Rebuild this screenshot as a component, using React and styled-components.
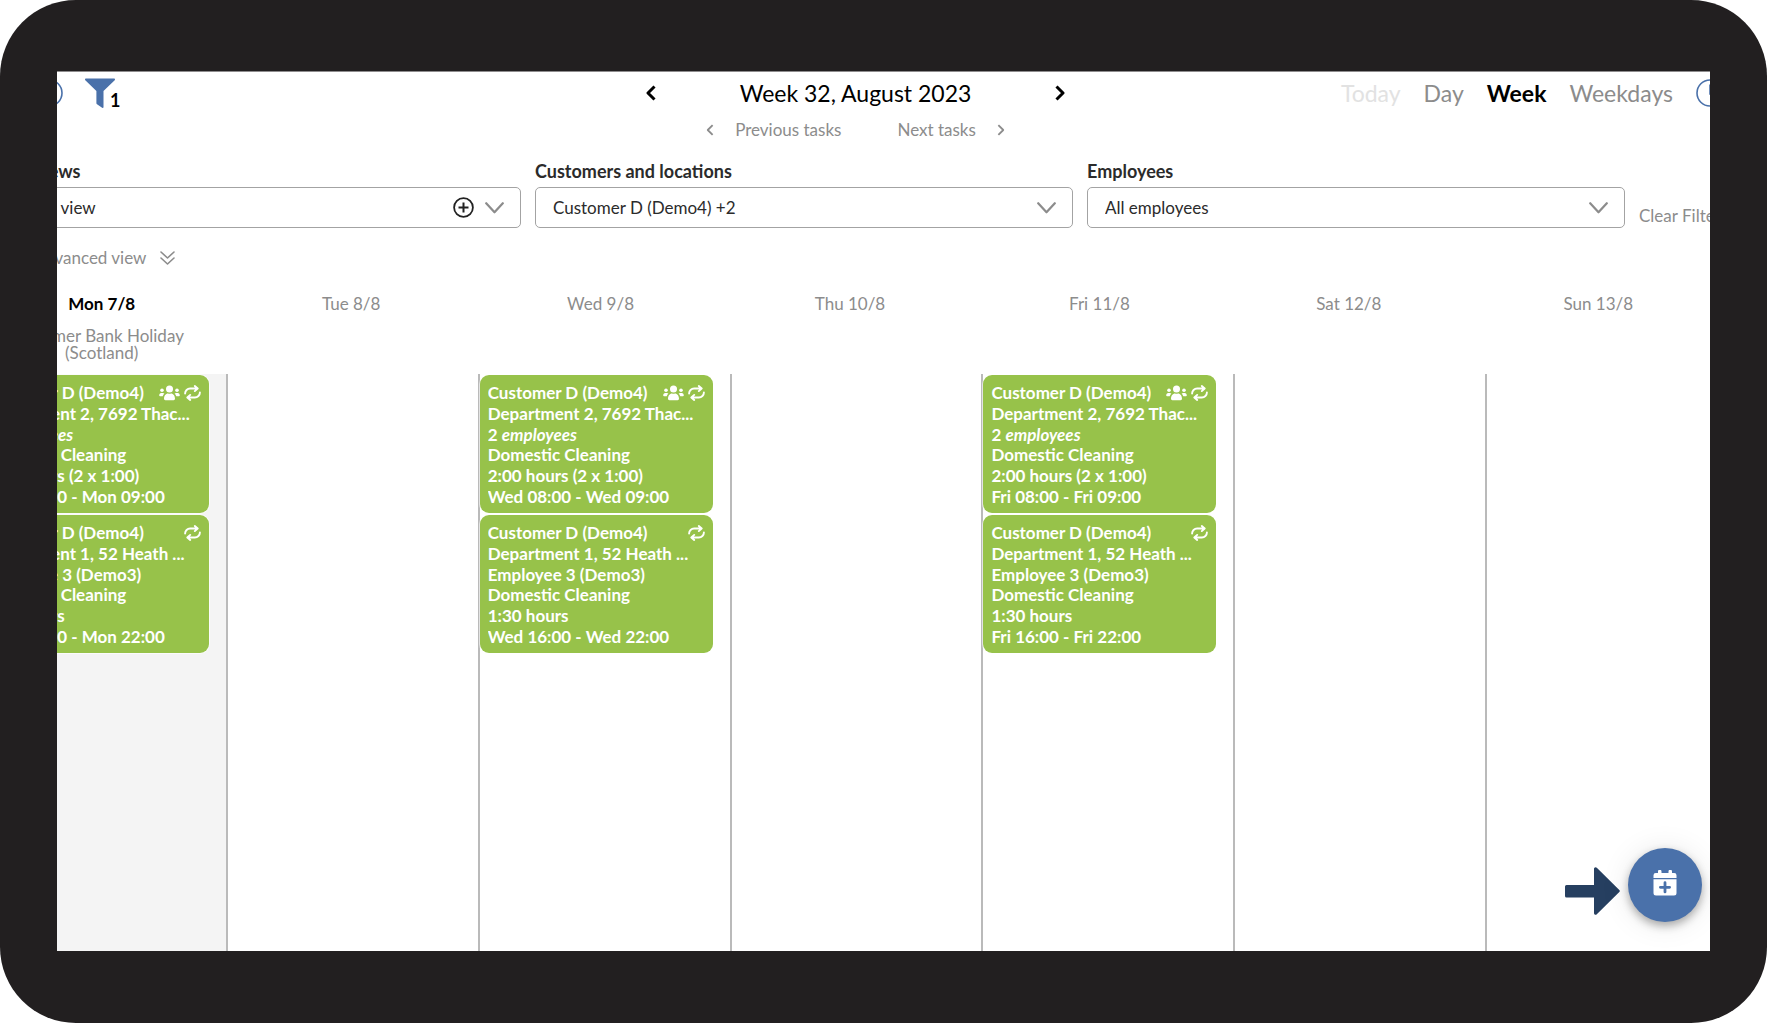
import React from 'react';
import styled, { createGlobalStyle, css } from 'styled-components';

const GlobalStyle = createGlobalStyle`
  *, *::before, *::after { box-sizing: border-box; }
  body {
    margin: 0;
    background: #fff;
    color: #000;
    font: 17px/20px Lato, "Liberation Sans", sans-serif;
  }
  button, select { font: inherit; color: inherit; }
  svg { display: block; flex: none; }
`;

const Device = styled.div`
  display: flex;
  min-height: 100vh;
  padding: 71px 57px 72px;
  border-radius: 76px;
  background: #221f20;
`;

const Screen = styled.main`
  position: relative;
  display: flex;
  flex: 1;
  min-width: 0;
  overflow: hidden;
  border-top: 1px solid #8f8d8e;
  background: #fff;
`;

/* The planner is wider than the screen and runs off both of its sides. */
const Planner = styled.div`
  display: flex;
  flex: 1;
  flex-direction: column;
  min-width: 0;
  margin: 0 -27px 0 -83px;
  padding-top: 7px;
`;

const Header = styled.header`
  display: grid;
  grid-template-columns: 1fr 420px 1fr;
  align-items: start;
`;

const PlainButton = styled.button`
  display: flex;
  align-items: center;
  padding: 0;
  border: 0;
  background: none;
  white-space: nowrap;
  cursor: pointer;
`;

const Tools = styled.div`
  display: flex;
  align-items: center;
  gap: 22px;
  height: 28px;
  padding-left: 61px;
  color: #4a71aa;
`;

const FilterButton = styled(PlainButton)`
  align-items: flex-end;
`;

const FilterCount = styled.span`
  margin-left: -5px;
  color: #000;
  font-size: 18px;
  font-weight: 700;
  line-height: 16px;
`;

const Period = styled.nav`
  display: flex;
  flex-direction: column;
  gap: 13px;
`;

const WeekSwitch = styled.div`
  display: flex;
  align-items: center;
  justify-content: space-between;
  height: 28px;
`;

const Title = styled.h1`
  margin: 0;
  font-size: 23px;
  font-weight: 400;
  line-height: 28px;
`;

const TaskSwitch = styled.div`
  display: flex;
  justify-content: center;
  gap: 56px;
  color: #8c8c8c;
`;

const TaskButton = styled(PlainButton)`
  gap: 21px;
`;

const Modes = styled.div`
  display: flex;
  align-items: center;
  justify-content: flex-end;
  gap: 23px;
  height: 28px;
  padding-right: 13px;
  color: #4a71aa;
`;

const Mode = styled(PlainButton)`
  color: #8c8c8c;
  font-size: 23px;
  line-height: 28px;
  &:disabled { color: #e2e2e2; }
  ${({ $active }) => $active && css`
    color: #000;
    font-weight: 700;
  `}
`;

const Filters = styled.section`
  display: grid;
  grid-template-columns: 1fr 1fr 1fr 98px;
  gap: 14px;
  align-items: end;
  margin-top: 21px;
  padding-left: 9px;
`;

const Field = styled.div`
  display: flex;
  flex-direction: column;
  gap: 6px;
  min-width: 0;
  color: #2b2b2b;
`;

const Label = styled.label`
  font-size: 18px;
  font-weight: 700;
`;

const SelectBox = styled.div`
  position: relative;
  display: flex;
`;

const Select = styled.select`
  flex: 1;
  min-width: 0;
  height: 41px;
  padding: 0 17px;
  border: 1px solid #a3a3a3;
  border-radius: 5px;
  background: #fff;
  appearance: none;
`;

const SelectIcons = styled.div`
  position: absolute;
  inset: 0 17px 0 auto;
  display: flex;
  align-items: center;
  gap: 11px;
  color: #8c8c8c;
  pointer-events: none;
`;

const AddButton = styled(PlainButton)`
  color: #222;
  pointer-events: auto;
`;

const ClearButton = styled(PlainButton)`
  padding-bottom: 2px;
  color: #8c8c8c;
`;

const AdvancedButton = styled(PlainButton)`
  gap: 14px;
  align-self: flex-start;
  margin-top: 20px;
  padding-left: 17px;
  color: #8c8c8c;
`;

const DayHeads = styled.div`
  display: grid;
  grid-template-columns: repeat(7, 1fr);
  min-height: 80px;
  margin: 26px 14px 0 3px;
`;

const DayHead = styled.div`
  display: flex;
  flex-direction: column;
  align-items: center;
  gap: 13px;
  color: #8c8c8c;
  text-align: center;
`;

const DayName = styled.h2`
  margin: 0;
  font-size: 17px;
  font-weight: ${({ $today }) => ($today ? 700 : 400)};
  color: ${({ $today }) => ($today ? '#000' : 'inherit')};
`;

const Holiday = styled.p`
  max-width: 180px;
  margin: 0;
  line-height: 17px;
`;

const Days = styled.div`
  display: grid;
  flex: 1;
  grid-template-columns: repeat(7, 1fr);
`;

const Day = styled.section`
  display: flex;
  flex-direction: column;
  gap: 2px;
  min-width: 0;
  padding: 1px 17px 0 0;
  border-left: 2px solid #bababa;
  background: ${({ $today }) => ($today ? '#f4f4f4' : '#fff')};
`;

const Card = styled.article`
  display: grid;
  grid-template-rows: repeat(6, 1fr);
  align-items: center;
  min-height: 138px;
  padding: 8px 8px 6px;
  border-radius: 9px;
  background: #97c24a;
  box-shadow: 0 0 0 1px rgba(255, 255, 255, 0.6);
  color: #fff;
  font-weight: 700;
`;

const CardTop = styled.div`
  display: flex;
  justify-content: space-between;
  align-items: center;
`;

const CardLine = styled.div`
  overflow: hidden;
  text-overflow: ellipsis;
  white-space: nowrap;
`;

const CardIcons = styled.div`
  display: flex;
  align-items: center;
  gap: 4px;
`;

const AddTask = styled.div`
  position: absolute;
  right: 8px;
  bottom: 29px;
  display: flex;
  align-items: center;
  gap: 8px;
`;

const Arrow = styled.svg`
  margin-top: 11px;
  fill: #263f60;
`;

const RoundButton = styled.button`
  display: grid;
  place-items: center;
  width: 74px;
  height: 74px;
  padding: 0 0 4px;
  border: 0;
  border-radius: 50%;
  background: #4a71aa;
  box-shadow: 0 4px 8px rgba(0, 0, 0, 0.3), 0 2px 30px rgba(0, 0, 0, 0.1);
  cursor: pointer;
`;

const Chevron = ({ dir, big }) => (
  <svg width={big ? 10 : 8} height={big ? 16 : 12} viewBox="0 0 10 16" fill="none"
    stroke="currentColor" strokeWidth={big ? 3 : 2.4} strokeLinejoin="round">
    <path d={dir === 'left' ? 'M8.5 1.5 2 8l6.5 6.5' : 'M1.5 1.5 8 8l-6.5 6.5'} />
  </svg>
);

const ChevronDown = () => (
  <svg width="19" height="12" viewBox="0 0 19 12" fill="none" stroke="currentColor"
    strokeWidth="2.2" strokeLinecap="round" strokeLinejoin="round">
    <path d="M1.2 1.2 9.5 10.3l8.3-9.1" />
  </svg>
);

const DoubleDown = () => (
  <svg width="15" height="14" viewBox="0 0 15 14" fill="none" stroke="currentColor"
    strokeWidth="1.6" strokeLinecap="round" strokeLinejoin="round">
    <path d="M1 1l6.5 6L14 1M1 7l6.5 6L14 7" />
  </svg>
);

const PlusCircle = () => (
  <svg width="21" height="21" viewBox="0 0 21 21" fill="none" stroke="currentColor" strokeWidth="1.8">
    <circle cx="10.5" cy="10.5" r="9.4" />
    <path d="M10.5 5.5v10M5.5 10.5h10" strokeWidth="2" />
  </svg>
);

const Ring = ({ children }) => (
  <svg width="28" height="28" viewBox="0 0 28 28" fill="none" stroke="currentColor" strokeWidth="1.6">
    <circle cx="14" cy="14" r="13" />
    {children}
  </svg>
);

const Funnel = () => (
  <svg width="30" height="30" viewBox="0 0 30 30" fill="currentColor">
    <path d="M1 .5h28c.9 0 1.3 1 .7 1.7L18.5 13v16c0 .8-.8 1.2-1.4.8L12 26.2c-.4-.3-.6-.6-.6-1V13L.3 2.2C-.3 1.5.1.5 1 .5z" />
  </svg>
);

const People = () => (
  <svg width="21" height="16" viewBox="0 0 21 16" fill="currentColor">
    <circle cx="10.5" cy="4" r="3.5" />
    <circle cx="3" cy="5.2" r="1.8" />
    <circle cx="18" cy="5.2" r="1.8" />
    <path d="M5 13.8c0-3 1.7-5.4 4-5.4.5.3 1 .4 1.500.4s1-.1 1.500-.4c2.300 0 4 2.400 4 5.400 0 .9-.6 1.400-1.400 1.400H6.400C5.600 15.200 5 14.700 5 13.800z" />
    <path d="M2.200 8h1.700c.6 0 1.100.2 1.500.6A6.500 6.500 0 0 0 3.700 11.200H1.100C.6 11.200.2 10.900.2 10.400.2 9 1 8 2.200 8zM18.800 8h-1.700c-.6 0-1.100.2-1.500.6a6.500 6.500 0 0 1 1.700 2.600h2.600c.5 0 .9-.3.9-.8C20.800 9 20 8 18.800 8z" />
  </svg>
);

const Repeat = () => (
  <svg width="17" height="16" viewBox="0 0 17 16" fill="none" stroke="currentColor"
    strokeWidth="1.9" strokeLinecap="round" strokeLinejoin="round">
    <path d="M1.100 8.500a5 5 0 0 1 5-5H13.500M10.800 1l2.900 2.500-2.900 2.600" />
    <path d="M15.900 7.500a5 5 0 0 1-5 5H3.500M6.200 15l-2.900-2.500 2.900-2.600" />
  </svg>
);

const CalendarPlus = () => (
  <svg width="24" height="26" viewBox="0 0 24 26" fill="#fff">
    <path d="M5 1.5a1.5 1.5 0 0 1 3.5 0V3h7V1.5a1.5 1.5 0 0 1 3.5 0V3h2.2A2.3 2.3 0 0 1 23.5 5.3V8H.5V5.3A2.3 2.3 0 0 1 2.8 3H5z" />
    <path fillRule="evenodd" d="M.5 9.300h23V23a2.500 2.500 0 0 1-2.500 2.500H3A2.500 2.500 0 0 1 .5 23zM10.600 12.700v3.200H7.400a1.400 1.400 0 0 0 0 2.800h3.200v3.200a1.400 1.400 0 0 0 2.800 0v-3.200h3.200a1.400 1.400 0 0 0 0-2.800h-3.200v-3.200a1.400 1.400 0 0 0-2.800 0z" />
  </svg>
);

const DAYS = ['Mon 7/8', 'Tue 8/8', 'Wed 9/8', 'Thu 10/8', 'Fri 11/8', 'Sat 12/8', 'Sun 13/8'];
const WORKDAYS = ['Mon', 'Wed', 'Fri'];

const tasksFor = (day) => (WORKDAYS.includes(day) ? [
  {
    id: 'morning',
    shared: true,
    place: 'Department 2, 7692 Thac...',
    staff: <>2 <em>employees</em></>,
    length: '2:00 hours (2 x 1:00)',
    time: `${day} 08:00 - ${day} 09:00`,
  },
  {
    id: 'evening',
    shared: false,
    place: 'Department 1, 52 Heath ...',
    staff: 'Employee 3 (Demo3)',
    length: '1:30 hours',
    time: `${day} 16:00 - ${day} 22:00`,
  },
] : []);

function TaskCard({ task }) {
  return (
    <Card>
      <CardTop>
        <CardLine>Customer D (Demo4)</CardLine>
        <CardIcons>
          {task.shared && <People />}
          <Repeat />
        </CardIcons>
      </CardTop>
      <CardLine>{task.place}</CardLine>
      <CardLine>{task.staff}</CardLine>
      <CardLine>Domestic Cleaning</CardLine>
      <CardLine>{task.length}</CardLine>
      <CardLine>{task.time}</CardLine>
    </Card>
  );
}

function FilterField({ id, label, value, onAdd }) {
  return (
    <Field>
      <Label htmlFor={id}>{label}</Label>
      <SelectBox>
        <Select id={id} defaultValue={value}>
          <option>{value}</option>
        </Select>
        <SelectIcons>
          {onAdd && <AddButton type="button" aria-label="Add view"><PlusCircle /></AddButton>}
          <ChevronDown />
        </SelectIcons>
      </SelectBox>
    </Field>
  );
}

export default function App() {
  return (
    <Device>
      <GlobalStyle />
      <Screen>
        <Planner>
          <Header>
            <Tools>
              <PlainButton type="button" aria-label="Help"><Ring /></PlainButton>
              <FilterButton type="button" aria-label="Filters">
                <Funnel />
                <FilterCount>1</FilterCount>
              </FilterButton>
            </Tools>
            <Period>
              <WeekSwitch>
                <PlainButton type="button" aria-label="Previous week"><Chevron dir="left" big /></PlainButton>
                <Title>Week 32, August 2023</Title>
                <PlainButton type="button" aria-label="Next week"><Chevron dir="right" big /></PlainButton>
              </WeekSwitch>
              <TaskSwitch>
                <TaskButton type="button"><Chevron dir="left" />Previous tasks</TaskButton>
                <TaskButton type="button">Next tasks<Chevron dir="right" /></TaskButton>
              </TaskSwitch>
            </Period>
            <Modes>
              <Mode type="button" disabled>Today</Mode>
              <Mode type="button">Day</Mode>
              <Mode type="button" $active>Week</Mode>
              <Mode type="button">Weekdays</Mode>
              <PlainButton type="button" aria-label="Time"><Ring><path d="M14 5.5V15l6 3" /></Ring></PlainButton>
            </Modes>
          </Header>

          <Filters>
            <FilterField id="views" label="Saved views" value="Default view" onAdd />
            <FilterField id="customers" label="Customers and locations" value="Customer D (Demo4) +2" />
            <FilterField id="employees" label="Employees" value="All employees" />
            <ClearButton type="button">Clear Filters</ClearButton>
          </Filters>

          <AdvancedButton type="button">Show advanced view<DoubleDown /></AdvancedButton>

          <DayHeads>
            {DAYS.map((name, i) => (
              <DayHead key={name}>
                <DayName $today={i === 0}>{name}</DayName>
                {i === 0 && <Holiday>Summer Bank Holiday (Scotland)</Holiday>}
              </DayHead>
            ))}
          </DayHeads>
          <Days>
            {DAYS.map((name, i) => (
              <Day key={name} $today={i === 0} aria-label={name}>
                {tasksFor(name.slice(0, 3)).map((task) => <TaskCard key={task.id} task={task} />)}
              </Day>
            ))}
          </Days>
        </Planner>

        <AddTask>
          <Arrow width="55" height="48" viewBox="0 0 55 48">
            <path d="M1.5 18H29V2c0-1.700 1.600-2.500 2.800-1.300L54.300 23c.7.7.7 1.300 0 2L31.800 47.300C30.600 48.500 29 47.700 29 46V30.500H1.500A1.500 1.500 0 0 1 0 29v-9.500A1.500 1.500 0 0 1 1.500 18z" />
          </Arrow>
          <RoundButton type="button" aria-label="Add task"><CalendarPlus /></RoundButton>
        </AddTask>
      </Screen>
    </Device>
  );
}
